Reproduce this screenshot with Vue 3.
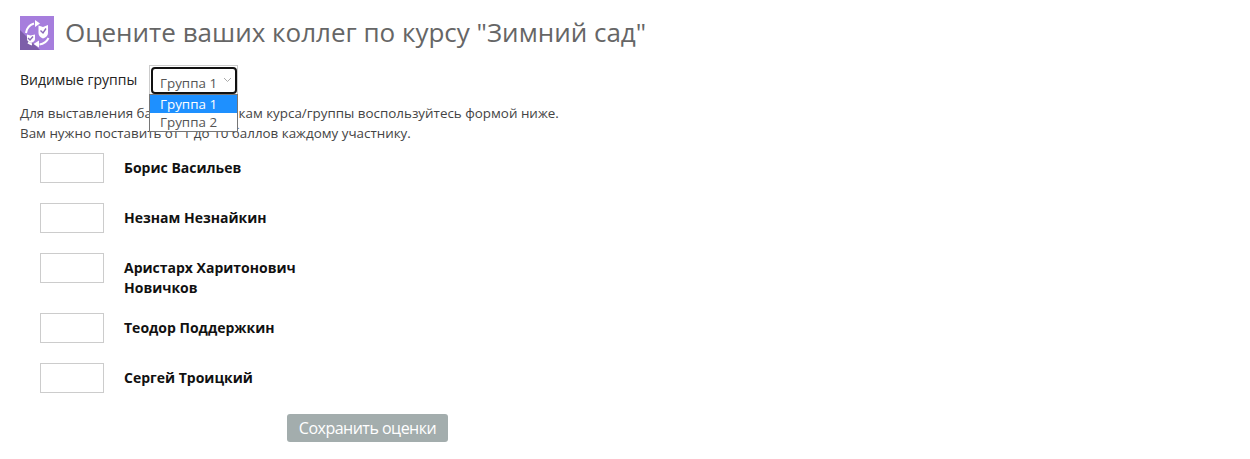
<template>
  <div class="page">
    <h1 class="title">
      <svg class="logo" width="34" height="34" viewBox="0 0 34 34">
        <rect width="34" height="34" fill="#a67edd" />
        <path d="M0 14L20 34H0z" fill="#7d5ea9" />
        <g fill="none" stroke="#fff" stroke-width="2">
          <path d="M6 17a11.500 11.500 0 0 1 8-9.500" />
          <path d="M28.500 22a11.500 11.500 0 0 1-9 6.500" />
          <path d="M8 26.500a11 11 0 0 0 4 2" />
        </g>
        <g fill="#fff">
          <path d="M15 4l5 3.500-5 3.500z" />
          <path d="M19 31.500l-5.500-3.500 5.500-3.500z" />
          <path d="M18.500 9.500l4.500 1.500 5-2v8q0 3.500-5 5.500-4.500-2-4.500-5.500z" />
          <path d="M7 18.500l3.500 1 4.500-1v4.500q0 2.500-4 4-4-1.500-4-4z" />
        </g>
        <g fill="none" stroke="#8a6ab8" stroke-width="1.400">
          <path d="M20.500 14.500l2.500 2.500 3-4.500" />
          <path d="M8 22l2 2 3-3.500" />
        </g>
      </svg>
      <span>Оцените ваших коллег по курсу "Зимний сад"</span>
    </h1>

    <div class="groups">
      <span class="groups-label">Видимые группы</span>
      <div class="select-wrap">
        <div class="select">
          <span>Группа 1</span>
          <svg class="chevron" width="9" height="6" viewBox="0 0 9 6">
            <path d="M1 1l3.500 3.500L8 1" fill="none" stroke="#aaa" stroke-width="1" />
          </svg>
        </div>
        <ul class="options">
          <li
            v-for="(g, i) in groups"
            :key="g"
            :class="{ selected: i === 0 }"
          >
            {{ g }}
          </li>
        </ul>
      </div>
    </div>

    <p class="hint">
      Для выставления баллов участникам курса/группы воспользуйтесь формой ниже.<br />
      Вам нужно поставить от 1 до 10 баллов каждому участнику.
    </p>

    <form class="rows" @submit.prevent>
      <div class="row" v-for="p in people" :key="p">
        <input class="score" type="text" />
        <div class="name">{{ p }}</div>
      </div>
      <button class="save" type="submit">Сохранить оценки</button>
    </form>
  </div>
</template>

<script setup>
const groups = ["Группа 1", "Группа 2"];
const people = [
  "Борис Васильев",
  "Незнам Незнайкин",
  "Аристарх Харитонович Новичков",
  "Теодор Поддержкин",
  "Сергей Троицкий",
];
</script>

<style>
html,
body {
  background: #fff;
}
</style>

<style scoped>
.page {
  padding: 16px 20px 0;
  height: 443px;
  font-family: "Open Sans", sans-serif;
  font-size: 14px;
  color: #333;
}
.title {
  display: flex;
  align-items: center;
  gap: 12px;
  margin: 0;
  height: 34px;
  font-size: 26px;
  font-weight: 400;
  color: #666;
}
.title span {
  margin-left: -1px;
  margin-top: -2px;
}
.logo {
  flex: none;
}
.groups {
  display: flex;
  align-items: flex-start;
  margin-top: 15px;
  height: 30px;
}
.groups-label {
  width: 129px;
  line-height: 30px;
  color: #222;
}
.select-wrap {
  position: relative;
  width: 89px;
  height: 30px;
}
.select {
  box-sizing: border-box;
  height: 30px;
  border: 1px solid #ccc;
  position: relative;
  padding: 5px 0 0 10px;
  font-size: 13.400px;
  line-height: 24px;
  color: #555;
}
.select::after {
  content: "";
  position: absolute;
  inset: 1px 0 0 1px;
  border: 2px solid #111;
  border-radius: 4px;
}
.chevron {
  position: absolute;
  right: 5px;
  top: 11px;
}
.options {
  position: absolute;
  left: 0;
  top: 29px;
  box-sizing: border-box;
  width: 89px;
  margin: 0;
  padding: 0;
  list-style: none;
  background: #fff;
  border: 1px solid #767676;
  font-size: 13.400px;
}
.options li {
  height: 18px;
  line-height: 18px;
  padding-left: 10px;
  color: #555;
}
.options li.selected {
  background: #1e90ff;
  color: #fff;
}
.hint {
  margin: 8px 0 0;
  font-size: 13.400px;
  line-height: 20px;
  color: #444;
}
.rows {
  margin-top: 10px;
  padding-left: 20px;
}
.row {
  display: flex;
  align-items: flex-start;
  min-height: 35px;
  margin-bottom: 15px;
}
.score {
  box-sizing: border-box;
  flex: none;
  width: 64px;
  height: 30px;
  border: 1px solid #ccc;
  background: #fff;
}
.name {
  width: 190px;
  margin-left: 20px;
  padding-top: 5px;
  font-weight: 700;
  line-height: 20px;
  color: #111;
}
.save {
  display: block;
  width: 161px;
  height: 28px;
  margin: 16px 0 0 247px;
  padding: 0;
  border: 0;
  border-radius: 3px;
  background: #a3adad;
  color: #fff;
  font-family: inherit;
  font-size: 16px;
  letter-spacing: -0.500px;
}
</style>
